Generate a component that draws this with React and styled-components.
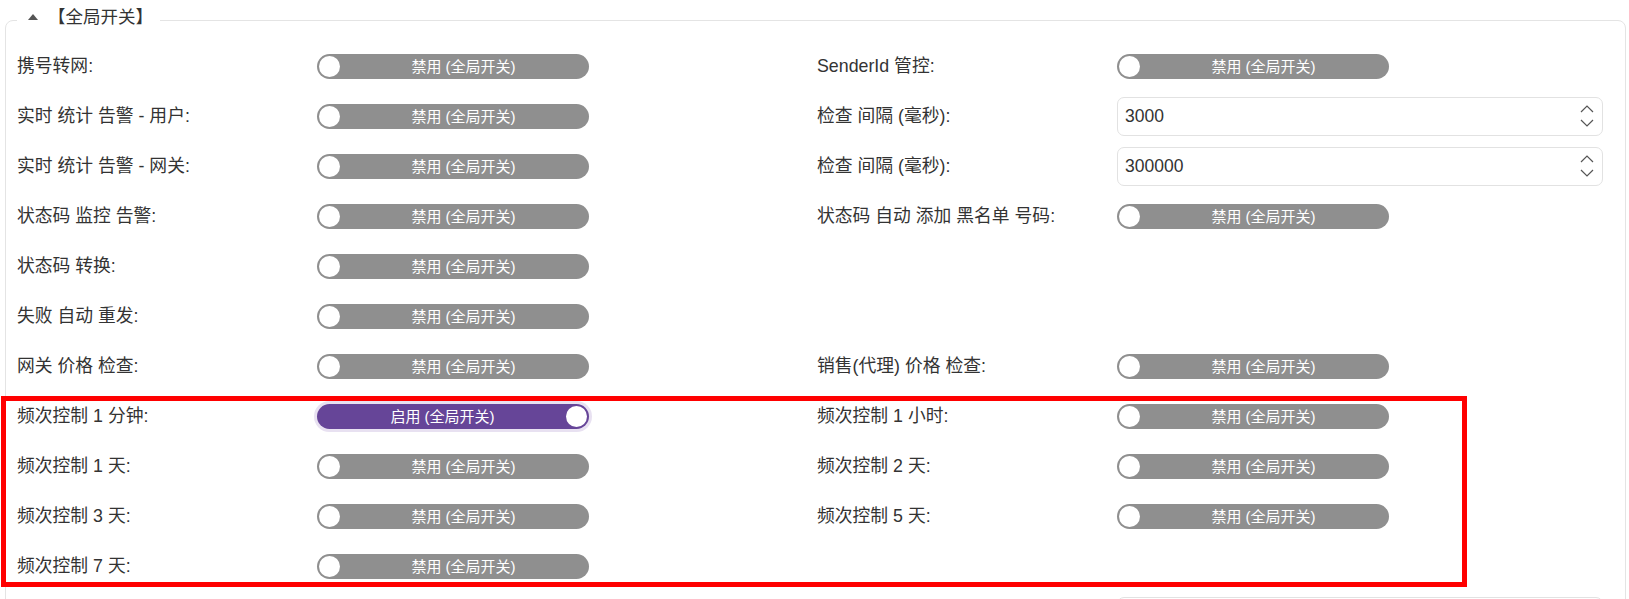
import React, {useState} from 'react';
import styled, {createGlobalStyle} from 'styled-components'

const GlobalStyle = createGlobalStyle`
  html, body {
    margin: 0;
    padding: 0;
    background: #fff;
  }
  body {
    font-family: "Liberation Sans", "Noto Sans CJK SC", sans-serif;
    color: #333;
  }
`;

const Page = styled.div`
  padding: 6px 3px 0 5px;
  overflow: hidden;
  height: 593px;
`;

const Fieldset = styled.fieldset`
  margin: 0;
  padding: 7px 11px 0 11px;
  border: 1px solid #e4e4e4;
  border-radius: 8px;
  min-width: 0;
`;

const Legend = styled.legend`
  padding: 0 7px 6px 11px;
  line-height: 22px;
  font-size: 17.5px;
  color: #333;
  display: flex;
  align-items: center;
`;

const Caret = styled.span`
  display: inline-block;
  width: 0;
  height: 0;
  border-left: 5px solid transparent;
  border-right: 5px solid transparent;
  border-bottom: 6px solid #555;
  margin-right: 10px;
`;

const Row = styled.div`
  display: grid;
  grid-template-columns: 300px 500px 300px 486px;
  align-items: center;
  height: 50px;
`;

const Label = styled.div`
  font-size: 17.8px;
  line-height: 22px;
  color: #333;
  white-space: nowrap;
`;

const Cell = styled.div`
  display: flex;
  align-items: center;
`;

const Highlight = styled.div`
  position: relative;
`;

const RedFrame = styled.div`
  position: absolute;
  left: -16px;
  top: 4.5px;
  width: 1456px;
  height: 181px;
  border: 5px solid #ff0000;
  pointer-events: none;
`;

const Switch = styled.button`
  box-sizing: border-box;
  width: 272px;
  height: 25px;
  padding: 2px;
  border: none;
  border-radius: 13px;
  display: flex;
  flex-direction: ${props => props.on ? 'row-reverse' : 'row'};
  align-items: center;
  cursor: pointer;
  background: ${props => props.on ? '#664598' : '#8f8f8f'};
  box-shadow: ${props => props.on ? '0 0 0 3px #e8e1f1' : 'none'};
  font-family: "Liberation Sans", "Noto Sans CJK SC", sans-serif;
`;

const Knob = styled.span`
  width: 21px;
  height: 21px;
  border-radius: 50%;
  background: #fff;
  flex: none;
`;

const SwitchText = styled.span`
  flex: 1;
  text-align: center;
  font-size: 15px;
  line-height: 21px;
  color: #fff;
`;

const NumberBox = styled.div`
  box-sizing: border-box;
  width: 486px;
  height: 39px;
  border: 1px solid #e2e2e2;
  border-radius: 7px;
  display: flex;
  align-items: center;
  padding: 0 8px 0 7px;
  background: #fff;
`;

const NumberInput = styled.input`
  flex: 1;
  border: none;
  outline: none;
  padding: 0;
  font-size: 17.5px;
  color: #333;
  font-family: "Liberation Sans", "Noto Sans CJK SC", sans-serif;
  background: transparent;
  -moz-appearance: textfield;
  &::-webkit-inner-spin-button,
  &::-webkit-outer-spin-button {
    -webkit-appearance: none;
    margin: 0;
  }
`;

const Stepper = styled.div`
  display: flex;
  flex-direction: column;
  gap: 6px;
`;

const Chevron = ({down}) => (
  <svg width="14" height="8" viewBox="0 0 14 8">
    <polyline
      points={down ? '1,1 7,7 13,1' : '1,7 7,1 13,7'}
      fill="none"
      stroke="#555"
      strokeWidth="1.2"
    />
  </svg>
)

const Toggle = ({initial}) => {
  const [on, setOn] = useState(initial)
  return (
    <Switch type="button" role="switch" aria-checked={on} on={on ? 1 : 0} onClick={() => setOn(!on)}>
      <Knob/>
      <SwitchText>{on ? '启用 (全局开关)' : '禁用 (全局开关)'}</SwitchText>
    </Switch>
  )
}

const NumberField = ({initial}) => {
  const [value, setValue] = useState(initial)
  return (
    <NumberBox>
      <NumberInput type="number" value={value} onChange={(e) => setValue(e.target.value)}/>
      <Stepper>
        <Chevron/>
        <Chevron down/>
      </Stepper>
    </NumberBox>
  )
}

const Control = ({item}) => {
  if (!item) return <Cell/>
  if (item.type === 'number') return <Cell><NumberField initial={item.value}/></Cell>
  return <Cell><Toggle initial={!!item.on}/></Cell>
}

const rows = [
  [{label: '携号转网:'}, {label: 'SenderId 管控:'}],
  [{label: '实时 统计 告警 - 用户:'}, {label: '检查 间隔 (毫秒):', type: 'number', value: '3000'}],
  [{label: '实时 统计 告警 - 网关:'}, {label: '检查 间隔 (毫秒):', type: 'number', value: '300000'}],
  [{label: '状态码 监控 告警:'}, {label: '状态码 自动 添加 黑名单 号码:'}],
  [{label: '状态码 转换:'}, null],
  [{label: '失败 自动 重发:'}, null],
  [{label: '网关 价格 检查:'}, {label: '销售(代理) 价格 检查:'}],
];

const freqRows = [
  [{label: '频次控制 1 分钟:', on: true}, {label: '频次控制 1 小时:'}],
  [{label: '频次控制 1 天:'}, {label: '频次控制 2 天:'}],
  [{label: '频次控制 3 天:'}, {label: '频次控制 5 天:'}],
  [{label: '频次控制 7 天:'}, null],
];

const renderRow = (pair, i) => (
  <Row key={i}>
    <Label>{pair[0] ? pair[0].label : ''}</Label>
    <Control item={pair[0]}/>
    <Label>{pair[1] ? pair[1].label : ''}</Label>
    <Control item={pair[1]}/>
  </Row>
)

export default function App() {
  return (
    <Page>
      <GlobalStyle/>
      <Fieldset>
        <Legend><Caret/>【全局开关】</Legend>
        {rows.map(renderRow)}
        <Highlight>
          {freqRows.map(renderRow)}
          <RedFrame/>
        </Highlight>
        <Row>
          <Label/>
          <Cell/>
          <Label/>
          <Control item={{type: 'number', value: ''}}/>
        </Row>
      </Fieldset>
    </Page>
  )
}
